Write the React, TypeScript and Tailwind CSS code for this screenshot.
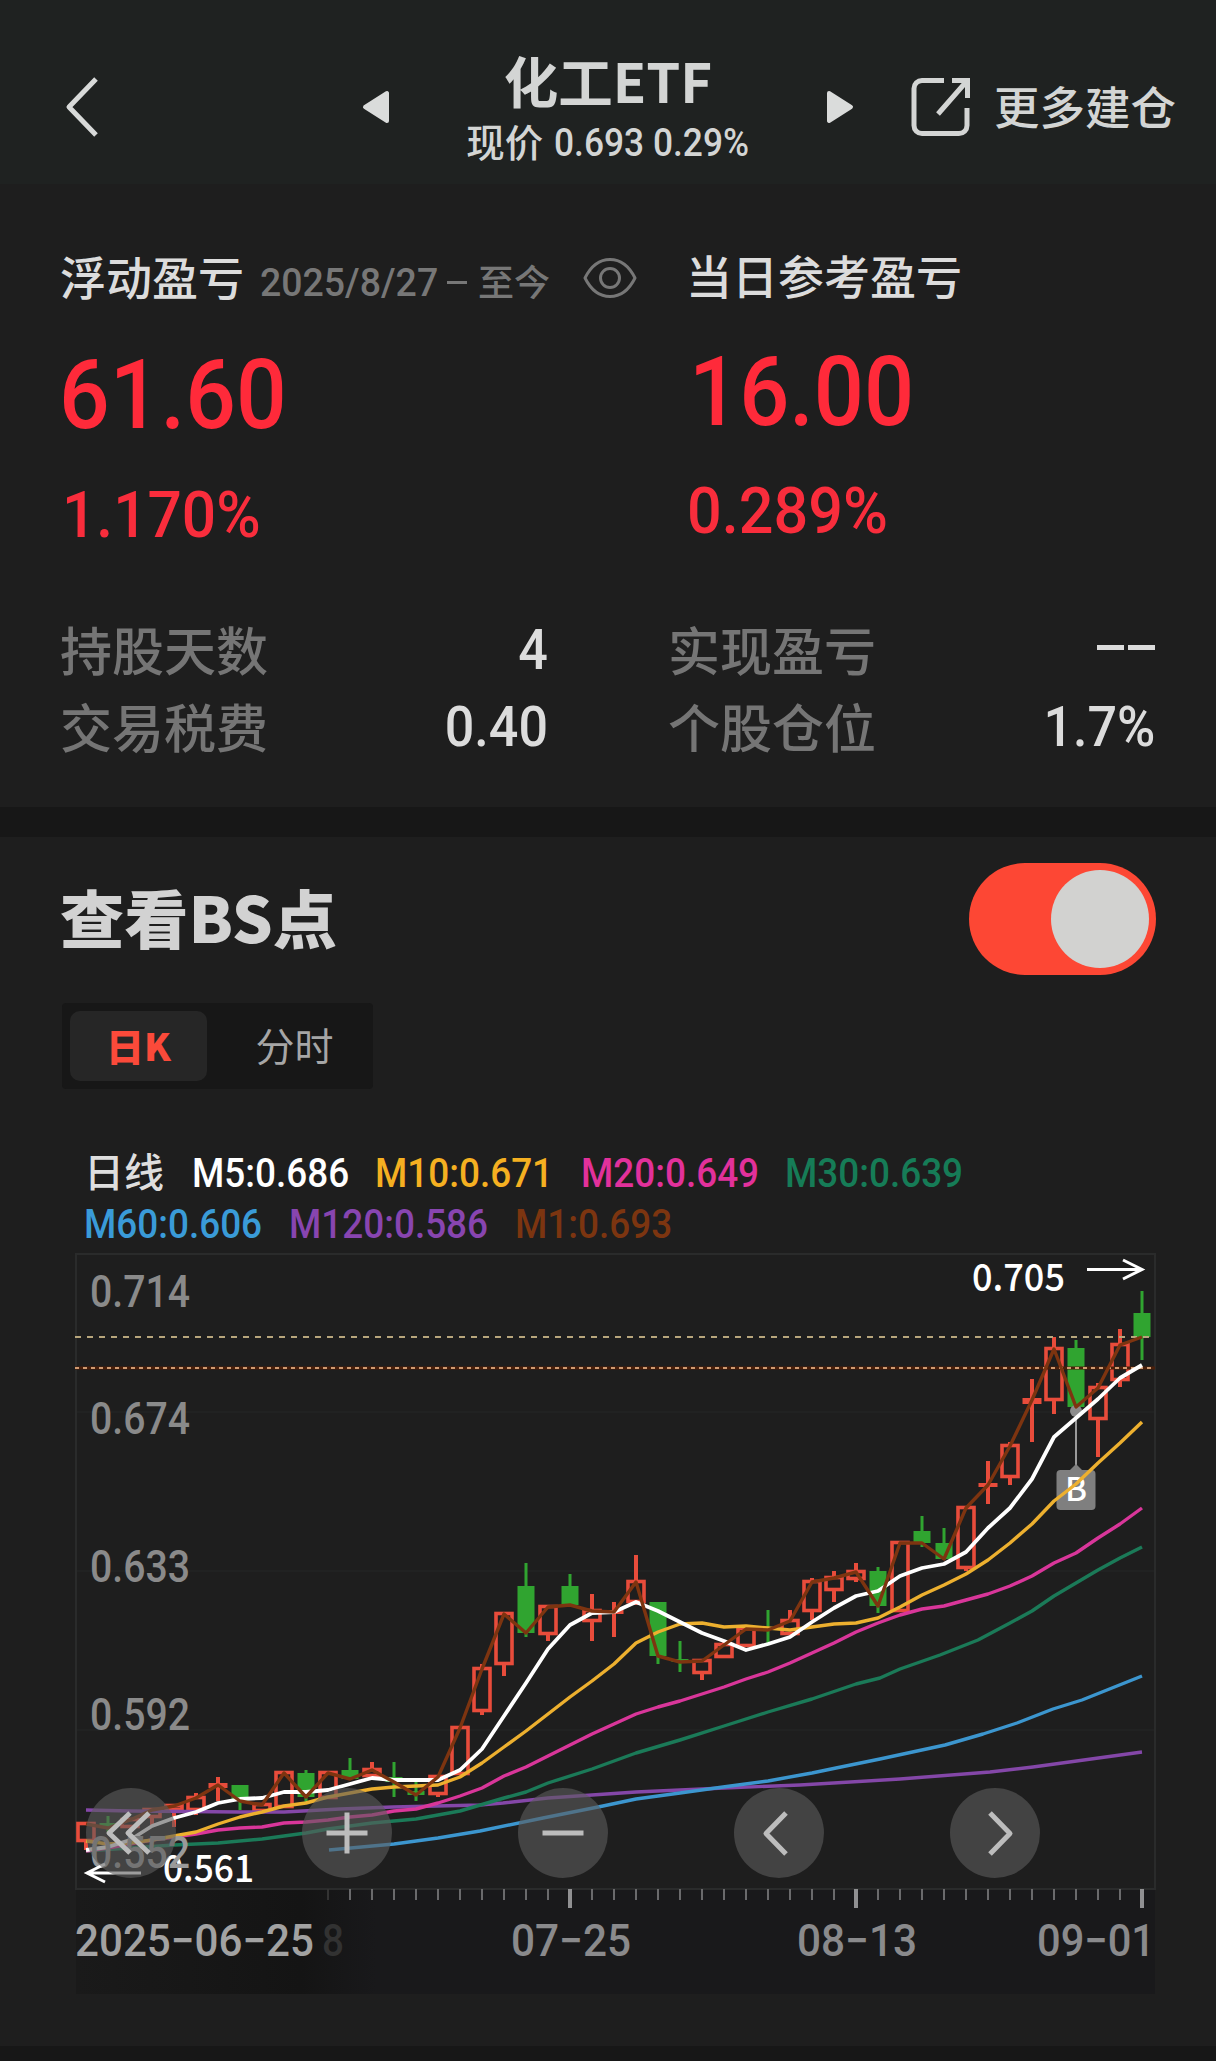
import type { ReactNode } from "react";

type Candle = {
  up: boolean;
  high: number;
  top: number;
  bottom: number;
  low: number;
};

const FIRST_X = 86;
const STEP = 22;

// [direction, high, body top, body bottom, low] in chart pixels
const RAW: [string, number, number, number, number][] = [
  ["r", 1822, 1822, 1842, 1850],
  ["g", 1816, 1823, 1828, 1832],
  ["r", 1818, 1818, 1828, 1828],
  ["r", 1808, 1808, 1818, 1825],
  ["r", 1804, 1804, 1811, 1827],
  ["r", 1793, 1796, 1811, 1815],
  ["r", 1777, 1783, 1788, 1801],
  ["g", 1785, 1785, 1801, 1810],
  ["r", 1803, 1803, 1812, 1812],
  ["r", 1771, 1771, 1808, 1808],
  ["g", 1770, 1773, 1797, 1803],
  ["r", 1771, 1771, 1799, 1799],
  ["g", 1758, 1770, 1779, 1780],
  ["r", 1762, 1768, 1777, 1777],
  ["g", 1762, 1777, 1782, 1797],
  ["g", 1782, 1791, 1795, 1801],
  ["r", 1775, 1775, 1795, 1797],
  ["r", 1726, 1726, 1775, 1775],
  ["r", 1664, 1667, 1712, 1715],
  ["r", 1612, 1612, 1665, 1676],
  ["g", 1563, 1586, 1633, 1637],
  ["r", 1605, 1605, 1635, 1641],
  ["g", 1574, 1586, 1605, 1605],
  ["r", 1594, 1609, 1622, 1641],
  ["r", 1602, 1610, 1614, 1637],
  ["r", 1555, 1580, 1603, 1605],
  ["g", 1602, 1602, 1656, 1664],
  ["g", 1641, 1659, 1662, 1672],
  ["r", 1659, 1659, 1674, 1680],
  ["r", 1641, 1643, 1658, 1658],
  ["r", 1627, 1627, 1647, 1647],
  ["g", 1610, 1627, 1630, 1643],
  ["r", 1610, 1619, 1635, 1635],
  ["r", 1578, 1580, 1612, 1620],
  ["r", 1571, 1576, 1591, 1602],
  ["r", 1563, 1570, 1580, 1582],
  ["g", 1567, 1571, 1606, 1613],
  ["r", 1541, 1541, 1612, 1612],
  ["g", 1516, 1531, 1543, 1547],
  ["g", 1528, 1543, 1559, 1560],
  ["r", 1506, 1506, 1569, 1571],
  ["r", 1461, 1483, 1487, 1504],
  ["r", 1442, 1444, 1478, 1485],
  ["r", 1379, 1398, 1404, 1442],
  ["r", 1337, 1347, 1401, 1414],
  ["g", 1340, 1348, 1407, 1408],
  ["r", 1383, 1386, 1420, 1457],
  ["r", 1329, 1343, 1381, 1387],
  ["g", 1291, 1313, 1337, 1360],
];

const candles: Candle[] = RAW.map(([kind, high, top, bottom, low]) => ({
  up: kind === "r",
  high,
  top,
  bottom,
  low,
}));

const M5 = [
  1850, 1847, 1840, 1826, 1818, 1812, 1803, 1799, 1798, 1792, 1792, 1790, 1784, 1778, 1780, 1780, 1780, 1770, 1749,
  1716, 1683, 1649, 1625, 1613, 1612, 1602, 1611, 1622, 1633, 1641, 1650, 1644, 1637, 1622, 1608, 1596, 1591, 1576,
  1568, 1564, 1552, 1528, 1508, 1479, 1437, 1418, 1399, 1378, 1365,
];

const M10 = [
  1841, 1844, 1843, 1840, 1836, 1832, 1824, 1817, 1812, 1806, 1803, 1797, 1793, 1789, 1787, 1786, 1785, 1777, 1763,
  1747, 1731, 1714, 1697, 1681, 1664, 1643, 1632, 1624, 1623, 1627, 1626, 1628, 1630, 1627, 1624, 1623, 1618, 1607,
  1595, 1585, 1574, 1560, 1543, 1524, 1501, 1484, 1463, 1443, 1422,
];

const M20 = [
  1851, 1848, 1844, 1840, 1837, 1834, 1830, 1828, 1827, 1823, 1822, 1820, 1817, 1815, 1811, 1809, 1803, 1796, 1788,
  1776, 1767, 1756, 1745, 1734, 1724, 1714, 1707, 1701, 1694, 1687, 1679, 1672, 1663, 1653, 1643, 1632, 1623, 1615,
  1609, 1606, 1600, 1594, 1586, 1576, 1563, 1553, 1538, 1524, 1508,
];

const M30 =
  "86,1851 174,1845 218,1843 262,1839 306,1833 328,1829 372,1823 416,1819 460,1811 504,1798 526,1792 548,1783 592,1769 636,1753 680,1740 724,1726 768,1712 812,1699 856,1684 880,1678 900,1669 940,1655 978,1640 1010,1623 1032,1611 1054,1596 1076,1583 1098,1570 1120,1558 1142,1547";
const M60 =
  "329,1850 394,1844 438,1838 480,1831 543,1818 603,1806 636,1799 680,1793 723,1787 768,1781 812,1773 836,1768 880,1759 945,1745 983,1734 1017,1723 1053,1709 1082,1700 1142,1676";
const M120 =
  "86,1810 130,1811 240,1812 284,1812 340,1809 393,1807 480,1805 503,1803 548,1798 636,1792 724,1788 800,1785 900,1779 990,1772 1033,1767 1142,1752";

const legend = [
  [
    { text: "M5:0.686", color: "text-white", width: "w-[183px]" },
    { text: "M10:0.671", color: "text-[#f5b021]", width: "w-[206px]" },
    { text: "M20:0.649", color: "text-[#e2319b]", width: "w-[204px]" },
    { text: "M30:0.639", color: "text-[#167c57]", width: "w-[200px]" },
  ],
  [
    { text: "M60:0.606", color: "text-[#3a9bd8]", width: "w-[205px]" },
    { text: "M120:0.586", color: "text-[#8845b0]", width: "w-[226px]" },
    { text: "M1:0.693", color: "text-[#7c3510]", width: "w-[180px]" },
  ],
];

const priceLabels = [
  { text: "0.714", y: 1307 },
  { text: "0.674", y: 1434 },
  { text: "0.633", y: 1582 },
  { text: "0.592", y: 1730 },
];

function xAt(i: number) {
  return FIRST_X + i * STEP;
}

function toPoints(values: number[]) {
  return values.map((y, i) => `${xAt(i)},${y}`).join(" ");
}

function IconBack() {
  return (
    <svg className="h-[62px] w-[36px]" viewBox="0 0 36 62" fill="none" aria-hidden>
      <path d="M34 3L7 31l27 28" stroke="#d8dad9" strokeWidth="5" strokeLinejoin="round" />
    </svg>
  );
}

function IconTriangle({ className }: { className?: string }) {
  return (
    <svg className={className} width="28" height="34" viewBox="0 0 28 34" aria-hidden>
      <path
        d="M25 3v28L3 17z"
        fill="#dadcdb"
        stroke="#dadcdb"
        strokeWidth="4"
        strokeLinejoin="round"
      />
    </svg>
  );
}

function IconExternal() {
  return (
    <svg className="h-[60px] w-[60px]" viewBox="0 0 60 60" fill="none" stroke="#d3d5d4" strokeWidth="5" aria-hidden>
      <path d="M33 3.500H11a8 8 0 0 0-8 8v37a8 8 0 0 0 8 8h37a8 8 0 0 0 8-8V31" />
      <path d="M41 3.500h15.500V21M55 5L27 37" />
    </svg>
  );
}

function IconEye() {
  return (
    <svg className="h-[42px] w-[54px]" viewBox="0 0 54 42" fill="none" stroke="#777777" strokeWidth="3" aria-hidden>
      <path d="M2 21C8 9 17 2.500 27 2.500S46 9 52 21C46 33 37 39.500 27 39.500S8 33 2 21z" strokeLinejoin="round" />
      <circle cx="27" cy="21" r="9.500" />
    </svg>
  );
}

function StatRow({ label, value }: { label: string; value: ReactNode }) {
  return (
    <div className="flex h-[77px] items-center justify-between">
      <span className="-mt-[2px] ml-[-1px] text-[52px] font-medium text-[#757575]">{label}</span>
      {value}
    </div>
  );
}

function Num({ children }: { children: ReactNode }) {
  return (
    <span className="inline-block origin-right scale-x-93 font-[Roboto] text-[56px] leading-none font-medium text-[#dcdcdc]">
      {children}
    </span>
  );
}

function Header() {
  return (
    <header className="flex h-[184px] items-start bg-[#1f2221] pl-[62px] text-[#d3d5d4]">
      <div className="mt-[76px] w-[300px]">
        <IconBack />
      </div>
      <IconTriangle className="mt-[90px]" />
      <div className="mt-[47px] flex w-[436px] flex-col items-center">
        <h1 className="text-[54.500px] leading-[66px] font-bold">化工ETF</h1>
        <p className="flex h-[56px] items-center whitespace-nowrap">
          <span className="text-[38.500px] font-medium">现价</span>
          <span className="mt-[4px] -mr-[14px] ml-[11px] origin-left scale-x-93 font-[Roboto] text-[38px] font-medium">
            0.693 0.29%
          </span>
        </p>
      </div>
      <IconTriangle className="mt-[90px] rotate-180" />
      <div className="mt-[77px] ml-[57px] flex items-center gap-[23px]">
        <IconExternal />
        <span className="-mt-[4px] text-[45.500px] leading-[60px] font-medium whitespace-nowrap">更多建仓</span>
      </div>
    </header>
  );
}

function Summary() {
  return (
    <section className="h-[623px] px-[61px]">
      <div className="flex">
        <div className="w-[626px]">
          <div className="mt-[61px] flex h-[66px] items-center whitespace-nowrap">
            <h2 className="-mt-[5px] ml-[-1px] text-[46px] font-medium text-[#dcdcdc]">浮动盈亏</h2>
            <span className="mt-[10px] ml-[16px] w-[187px] origin-left scale-x-96 font-[Roboto] text-[39px] font-medium text-[#777777]">
              2025/8/27
            </span>
            <span className="mt-[8px] h-[3px] w-[20px] bg-[#777777]" />
            <span className="mt-[3px] ml-[11px] w-[105px] text-[36px] font-medium text-[#777777]">至今</span>
            <IconEye />
          </div>
          <p className="mt-[29px] ml-[-2px] h-[110px] origin-left scale-x-92 font-[Roboto] text-[97px] leading-[110px] font-medium text-[#ff2a3a]">
            61.60
          </p>
          <p className="mt-[28px] ml-[1px] h-[74px] origin-left scale-x-93 font-[Roboto] text-[65px] leading-[74px] font-medium text-[#f92d3c]">
            1.170%
          </p>
        </div>
        <div className="flex-1">
          <div className="mt-[60px] flex h-[66px] items-center whitespace-nowrap">
            <h2 className="-mt-[5px] ml-[-1px] text-[46px] font-medium text-[#dcdcdc]">当日参考盈亏</h2>
          </div>
          <p className="mt-[27px] ml-[2px] h-[110px] origin-left scale-x-91 font-[Roboto] text-[97px] leading-[110px] font-medium text-[#ff2a3a]">
            16.00
          </p>
          <p className="mt-[27px] h-[74px] origin-left scale-x-94 font-[Roboto] text-[65px] leading-[74px] font-medium text-[#f92d3c]">
            0.289%
          </p>
        </div>
      </div>
      <div className="mt-[59px] grid grid-cols-[487px_486px] justify-between">
        <StatRow label="持股天数" value={<Num>4</Num>} />
        <StatRow
          label="实现盈亏"
          value={
            <span className="mb-[4px] flex gap-[4px]">
              <span className="h-[5px] w-[27px] bg-[#dcdcdc]" />
              <span className="h-[5px] w-[27px] bg-[#dcdcdc]" />
            </span>
          }
        />
        <StatRow label="交易税费" value={<Num>0.40</Num>} />
        <StatRow label="个股仓位" value={<Num>1.7%</Num>} />
      </div>
    </section>
  );
}

function CandleShape({ candle, x }: { candle: Candle; x: number }) {
  const { up, high, top, bottom, low } = candle;
  if (!up) {
    return (
      <g fill="#30a430">
        <rect x={x - 1.5} y={high} width="3" height={low - high} />
        <rect x={x - 8.5} y={top} width="17" height={bottom - top} />
      </g>
    );
  }
  return (
    <g fill="#e84c3b">
      <rect x={x - 2} y={high} width="4" height={Math.max(top - high, 0)} />
      <rect x={x - 2} y={bottom} width="4" height={Math.max(low - bottom, 0)} />
      {bottom - top < 7 ? (
        <rect x={x - 9.5} y={top} width="19" height={bottom - top} />
      ) : (
        <rect
          x={x - 8}
          y={top + 1.5}
          width="16"
          height={bottom - top - 3}
          fill="none"
          stroke="#e84c3b"
          strokeWidth="3.600"
        />
      )}
    </g>
  );
}

function Ticks() {
  return (
    <>
      {candles.map((_, i) => {
        if (i < 11) return null;
        const major = i === 22 || i === 35 || i === 48;
        return (
          <rect
            key={i}
            x={xAt(i) - (major ? 2 : 1)}
            y={1889}
            width={major ? 4 : 2}
            height={major ? 19 : 11}
            fill={major ? "#909092" : i === 11 ? "#333333" : "#6a6a6c"}
          />
        );
      })}
    </>
  );
}

function KLineChart() {
  const closes = candles.map((c) => (c.up ? c.top + 2 : c.bottom));
  return (
    <svg className="block h-[748px] w-[1082px]" viewBox="75 1246 1082 748" fill="none">
      <defs>
        <linearGradient id="axisFade" x1="0" x2="1" y1="0" y2="0">
          <stop offset="0" stopColor="#1a1a1a" />
          <stop offset="0.750" stopColor="#141414" />
          <stop offset="1" stopColor="#19191b" />
        </linearGradient>
      </defs>

      <rect x="76" y="1890" width="1079" height="104" fill="#19191b" />
      <rect x="76" y="1890" width="300" height="104" fill="url(#axisFade)" />
      <g stroke="#242525" strokeWidth="2">
        <path d="M76 1412H1155M76 1571H1155M76 1730H1155" stroke="#212222" />
        <rect x="76" y="1254" width="1079" height="635" stroke="#2a2b2b" />
      </g>

      <g fontFamily="Roboto" fontSize="44" fontWeight="500" fill="#8a8a8a">
        {priceLabels.map((l) => (
          <text key={l.text} x="90" y={l.y} textLength="100" lengthAdjust="spacingAndGlyphs">
            {l.text}
          </text>
        ))}
      </g>

      {candles.map((c, i) => (
        <CandleShape key={i} candle={c} x={xAt(i)} />
      ))}

      <path d="M75 1337H1155" stroke="#b8a67c" strokeWidth="2" strokeDasharray="6 6" />
      <path d="M75 1368H1155" stroke="#4a1f0a" strokeWidth="3" />
      <path d="M75 1368H1155" stroke="#d09a70" strokeWidth="2" strokeDasharray="4 4" />

      <path d="M1076 1411V1466" stroke="#9a9a9a" strokeWidth="2" />
      <circle cx="1076" cy="1411" r="6" fill="#8c8c8c" />
      <path d="M1069 1471l7-7 7 7z" fill="#808080" />
      <rect x="1056.500" y="1470" width="39" height="40" rx="4" fill="#7f7f7f" />
      <text
        x="1076"
        y="1501"
        textAnchor="middle"
        fontFamily="'Noto Sans CJK SC', sans-serif"
        fontSize="33"
        fontWeight="500"
        fill="#ffffff"
      >
        B
      </text>

      <g strokeWidth="3.400" strokeLinejoin="round">
        <polyline points={M120} stroke="#8447a8" />
        <polyline points={M60} stroke="#3c96cf" />
        <polyline points={M30} stroke="#1b7a58" />
        <polyline points={toPoints(M20)} stroke="#d9369a" />
        <polyline points={toPoints(M10)} stroke="#edb02f" />
        <polyline points={toPoints(M5)} stroke="#ffffff" strokeWidth="3.800" />
        <polyline points={toPoints(closes)} stroke="#7d3410" />
      </g>

      <g fontFamily="'Noto Sans CJK SC', sans-serif" fontSize="38" fontWeight="500" fill="#ffffff">
        <text x="972" y="1291" textLength="93" lengthAdjust="spacingAndGlyphs">
          0.705
        </text>
        <text x="163" y="1882" textLength="91" lengthAdjust="spacingAndGlyphs">
          0.561
        </text>
      </g>
      {/* lowest price label sits above the low marker */}
      <text
        x="90"
        y="1868"
        fontFamily="Roboto"
        fontSize="44"
        fontWeight="500"
        fill="#9a9a9a"
        textLength="100"
        lengthAdjust="spacingAndGlyphs"
      >
        0.552
      </text>
      <g stroke="#ffffff" strokeWidth="3">
        <path d="M1087 1269.500h54M1123 1260l19 9.500-19 9.500" />
        <path d="M141 1873H88M105 1864l-18 9 18 9" />
      </g>

      <Ticks />
      <g fontFamily="Roboto" fontSize="45" fontWeight="500" fill="#8a8a8c">
        <text x="75" y="1956" fill="#a2a2a2" textLength="239" lengthAdjust="spacingAndGlyphs">
          2025−06−25
        </text>
        <text x="322" y="1956" fill="#323232" textLength="22" lengthAdjust="spacingAndGlyphs">
          8
        </text>
        <text x="511" y="1956" textLength="120" lengthAdjust="spacingAndGlyphs">
          07−25
        </text>
        <text x="797" y="1956" textLength="120" lengthAdjust="spacingAndGlyphs">
          08−13
        </text>
        <text x="1037" y="1956" textLength="118" lengthAdjust="spacingAndGlyphs">
          09−01
        </text>
      </g>
    </svg>
  );
}

const controls = [
  { label: "Jump back", d: "M44 25L23 45l21 20M63 25L42 45l21 20" },
  { label: "Zoom in", d: "M24.500 45h41M45 24.500v41" },
  { label: "Zoom out", d: "M24.500 45h41" },
  { label: "Previous", d: "M52 25L32 45.500l20 20.500" },
  { label: "Next", d: "M40 25l20 20.500-20 20.500" },
];

function ChartControls() {
  return (
    <div className="absolute top-[542px] left-[11px] flex gap-[126px]">
      {controls.map((c) => (
        <button
          key={c.label}
          type="button"
          aria-label={c.label}
          className="h-[90px] w-[90px] rounded-full bg-[#5c5c5c]/60"
        >
          <svg width="90" height="90" viewBox="0 0 90 90" fill="none" aria-hidden>
            <path d={c.d} stroke="#bdbdbd" strokeWidth="5" strokeLinejoin="round" />
          </svg>
        </button>
      ))}
    </div>
  );
}

export default function App() {
  return (
    <main className="h-[2061px] w-[1216px] overflow-hidden bg-[#1e1e1e] font-['Noto_Sans_CJK_SC',sans-serif]">
      <Header />
      <Summary />
      <div className="h-[30px] bg-[#171717]" />

      <section className="h-[1209px] pt-[26px]">
        <div className="flex h-[112px] items-center justify-between pr-[60px] pl-[60px]">
          <h2 className="-mt-[5px] origin-left scale-x-102 text-[63px] font-black text-[#d2d2d2]">查看BS点</h2>
          <button
            type="button"
            role="switch"
            aria-checked
            aria-label="查看BS点"
            className="flex h-[112px] w-[187px] items-center justify-end rounded-full bg-[#fd4734] pr-[7px]"
          >
            <span className="h-[98px] w-[98px] rounded-full bg-[#d2d2d0]" />
          </button>
        </div>

        <div className="mt-[28px] ml-[62px] flex h-[86px] w-[311px] items-center rounded-[4px] bg-[#171717] pl-[8px] text-[38px]">
          <span className="flex h-[70px] w-[137px] items-center justify-center rounded-[10px] bg-[#262626] font-black text-[#fb4a3a]">
            <span className="-mt-[3px]">日K</span>
          </span>
          <span className="-mt-[3px] flex flex-1 items-center justify-center pl-[9px] text-[39px] text-[#a6a6a6]">
            分时
          </span>
        </div>

        <div className="mt-[57px] flex h-[51px] items-center pl-[84px] whitespace-nowrap">
          <span className="-mt-[3px] w-[108px] text-[40px] font-medium text-[#dedede]">日线</span>
          {legend[0].map((m) => (
            <span key={m.text} className={`${m.width} mt-[4px] font-[Roboto] text-[41px] font-medium`}>
              <span className={`${m.color} inline-block origin-left scale-x-90`}>{m.text}</span>
            </span>
          ))}
        </div>
        <div className="flex h-[49px] items-center pl-[84px] whitespace-nowrap">
          {legend[1].map((m) => (
            <span key={m.text} className={`${m.width} mt-[6px] font-[Roboto] text-[41px] font-medium`}>
              <span className={`${m.color} inline-block origin-left scale-x-90`}>{m.text}</span>
            </span>
          ))}
        </div>

        <div className="relative ml-[75px] w-[1082px]">
          <KLineChart />
          <ChartControls />
        </div>
      </section>
      <div className="h-[15px] bg-[#171717]" />
    </main>
  );
}
